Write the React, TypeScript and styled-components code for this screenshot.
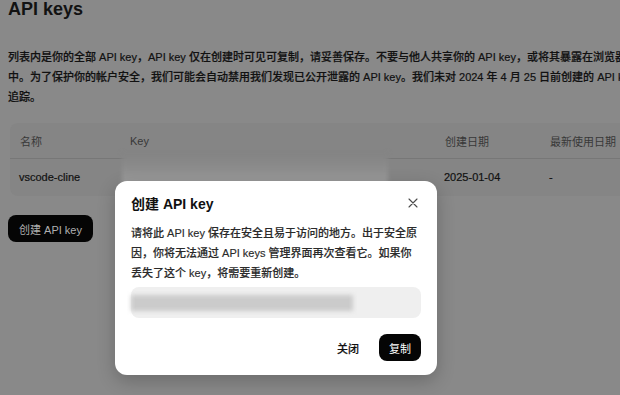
import React from 'react'
import styled, { createGlobalStyle } from 'styled-components'

const GlobalStyle = createGlobalStyle`
  html, body {
    margin: 0;
    padding: 0;
    width: 620px;
    height: 395px;
    overflow: hidden;
    background: #898989;
  }
  body {
    font-family: "Liberation Sans", "Noto Sans CJK SC", sans-serif;
    color: #141414;
  }
`

const Page = styled.div`
  width: 760px;
  padding: 0 0 0 8px;
`

const Title = styled.h1`
  margin: -2px 0 0;
  font-size: 18px;
  line-height: 22px;
  font-weight: 700;
  color: #121212;
`

// the intro runs past the right edge in the reference too
const Intro = styled.p`
  margin: 27px 0 0;
  font-size: 11px;
  line-height: 20px;
  font-weight: 500;
  color: #111;
  -webkit-text-stroke: 0.2px #111;
`

const IntroLine = styled.span`
  display: block;
  white-space: nowrap;
`

const TableCard = styled.div`
  position: relative;
  margin: 16px 0 0 2px;
  background: #858585;
  border-radius: 8px;
`

const Row = styled.div<{ $head?: boolean }>`
  display: grid;
  grid-template-columns: 110px 315px 105px 1fr;
  align-items: center;
  height: ${p => (p.$head ? '35px' : '37px')};
  border-bottom: ${p => (p.$head ? '1px solid #777' : 'none')};
`

const Cell = styled.div<{ $head?: boolean }>`
  padding-left: ${p => (p.$head ? '10px' : '9px')};
  padding-bottom: ${p => (p.$head ? '0' : '2px')};
  font-size: 11px;
  font-weight: ${p => (p.$head ? 400 : 500)};
  color: ${p => (p.$head ? '#383838' : '#111')};
  -webkit-text-stroke: ${p => (p.$head ? '0' : '0.2px #111')};
  white-space: nowrap;
`

const Redaction = styled.div`
  position: absolute;
  left: 112px;
  top: 30px;
  width: 266px;
  height: 32px;
  background: linear-gradient(180deg, #838383 0%, #8b8b8b 45%, #969696 75%, #9c9c9c 100%);
  filter: blur(2px);
`

const DarkButton = styled.button<{ $small?: boolean }>`
  border: none;
  background: #050505;
  border-radius: 8px;
  font-family: inherit;
  font-size: 11px;
  height: 27px;
  padding: ${p => (p.$small ? '0 10px' : '0 12px')};
  color: ${p => (p.$small ? '#ffffff' : '#b0b0b0')};
  cursor: pointer;
`

const CreateButton = styled(DarkButton)`
  margin-top: 19px;
  width: 85px;
  padding: 0;
`

const Dialog = styled.div`
  position: absolute;
  left: 115px;
  top: 181px;
  width: 322px;
  box-sizing: border-box;
  padding: 11px 16px 14px;
  background: #ffffff;
  border-radius: 12px;
  box-shadow: 0 6px 18px rgba(0, 0, 0, 0.22);
  display: flex;
  flex-direction: column;
`

const DialogHeader = styled.div`
  display: flex;
  align-items: center;
  justify-content: space-between;
  height: 22px;
`

const DialogTitle = styled.h2`
  margin: 0;
  font-size: 14px;
  font-weight: 700;
  color: #111;
`

const CloseButton = styled.button`
  border: none;
  background: none;
  padding: 0;
  margin-right: 1px;
  width: 14px;
  height: 14px;
  display: flex;
  align-items: center;
  justify-content: center;
  color: #4a4a4a;
  cursor: pointer;
`

const DialogText = styled.p`
  margin: 9px 0 0;
  font-size: 11px;
  line-height: 20px;
  font-weight: 500;
  color: #2a2a2a;
  -webkit-text-stroke: 0.15px #2a2a2a;
`

const KeyField = styled.div`
  margin-top: 4px;
  height: 31px;
  border-radius: 8px;
  background: #efefef;
  display: flex;
  align-items: center;
`

const KeyBlur = styled.div`
  width: 222px;
  height: 16px;
  background: #cbcbcb;
  filter: blur(2px);
`

const Actions = styled.div`
  margin-top: 16px;
  display: flex;
  justify-content: flex-end;
  align-items: center;
  gap: 10px;
`

const TextButton = styled.button`
  border: none;
  background: none;
  font-family: inherit;
  font-size: 11px;
  font-weight: 500;
  color: #111;
  -webkit-text-stroke: 0.2px #111;
  padding: 0 10px;
  height: 27px;
  cursor: pointer;
`

const columns = ['名称', 'Key', '创建日期', '最新使用日期']

export default function App() {
  return (
    <>
      <GlobalStyle />
      <Page>
        <Title>API keys</Title>
        <Intro>
          <IntroLine>列表内是你的全部 API key，API key 仅在创建时可见可复制，请妥善保存。不要与他人共享你的 API key，或将其暴露在浏览器</IntroLine>
          <IntroLine>中。为了保护你的帐户安全，我们可能会自动禁用我们发现已公开泄露的 API key。我们未对 2024 年 4 月 25 日前创建的 API key 的使用情况进行</IntroLine>
          <IntroLine>追踪。</IntroLine>
        </Intro>
        <TableCard>
          <Row $head>
            {columns.map(c => (
              <Cell $head key={c}>{c}</Cell>
            ))}
          </Row>
          <Row>
            <Cell>vscode-cline</Cell>
            <Cell />
            <Cell>2025-01-04</Cell>
            <Cell>-</Cell>
          </Row>
          <Redaction />
        </TableCard>
        <CreateButton>创建 API key</CreateButton>
      </Page>

      <Dialog role="dialog">
        <DialogHeader>
          <DialogTitle>创建 API key</DialogTitle>
          <CloseButton aria-label="关闭">
            <svg width="10" height="10" viewBox="0 0 10 10" fill="none" stroke="currentColor" strokeWidth="1.1" strokeLinecap="round">
              <path d="M1 1L9 9M9 1L1 9" />
            </svg>
          </CloseButton>
        </DialogHeader>
        <DialogText>
          请将此 API key 保存在安全且易于访问的地方。出于安全原因，你将无法通过 API keys 管理界面再次查看它。如果你丢失了这个 key，将需要重新创建。
        </DialogText>
        <KeyField>
          <KeyBlur />
        </KeyField>
        <Actions>
          <TextButton>关闭</TextButton>
          <DarkButton $small>复制</DarkButton>
        </Actions>
      </Dialog>
    </>
  )
}
